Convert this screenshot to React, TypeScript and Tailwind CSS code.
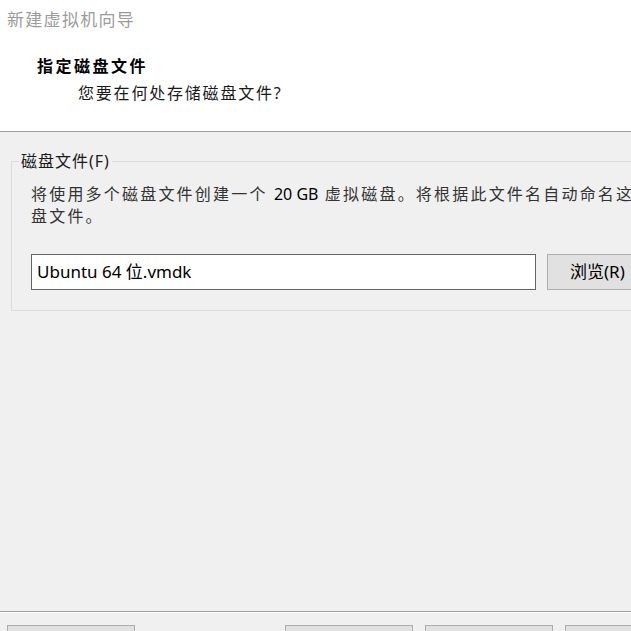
export default function App() {
  const font = { fontFamily: '"Noto Sans", "Noto Sans CJK SC", sans-serif' };

  return (
    <div className="w-[631px] h-[631px] overflow-hidden flex flex-col bg-[#f0f0f0]" style={font}>
      {/* header */}
      <div className="h-[132px] shrink-0 bg-white border-b border-[#a0a0a0]">
        <div className="pl-[7px] pt-[8px] text-[17px] leading-[24px] tracking-[1.3px] text-[#9b9b9b]">新建虚拟机向导</div>
        <div className="pl-[37px] pt-[22px] text-[16px] leading-[24px] tracking-[2.5px] font-bold text-black">指定磁盘文件</div>
        <div className="pl-[78px] pt-[3px] text-[16px] leading-[24px] tracking-[1.8px] text-[#1a1a1a]">您要在何处存储磁盘文件?</div>
      </div>

      {/* body */}
      <div className="flex-1 min-h-0">
        <fieldset className="mt-[19px] ml-[11px] w-[660px] border border-[#dcdcdc] pl-[19px] pt-[12px] pb-[20px]">
          <legend className="-ml-[12px] px-[2px] text-[16px] leading-[20px] tracking-[1px] text-[#1a1a1a]">磁盘文件(F)</legend>
          <p className="whitespace-nowrap text-[16px] leading-[22px] tracking-[2.2px] text-[#333]">
            将使用多个磁盘文件创建一个 <span className="text-black tracking-normal">20 GB</span> 虚拟磁盘。将根据此文件名自动命名这些磁
            <br />
            盘文件。
          </p>
          <div className="mt-[27px] flex gap-[11px]">
            <div className="w-[505px] h-[36px] shrink-0 bg-white border border-[#646464] flex items-center pl-[5px] text-[17px] text-black">
              Ubuntu 64 位.vmdk
            </div>
            <button className="w-[100px] h-[36px] shrink-0 bg-[#e1e1e1] border border-[#adadad] text-left pl-[22px] text-[17px] text-black">
              浏览(R)
            </button>
          </div>
        </fieldset>
      </div>

      {/* footer */}
      <div className="h-[20px] shrink-0 border-t border-[#a0a0a0]">
        <div className="h-px bg-white" />
        <div className="pt-[12px] flex">
          <button aria-label="帮助" className="ml-[7px] w-[128px] h-[30px] shrink-0 bg-[#e1e1e1] border border-[#adadad]" />
          <button aria-label="上一步" className="ml-[150px] w-[128px] h-[30px] shrink-0 bg-[#e1e1e1] border border-[#adadad]" />
          <button aria-label="下一步" className="ml-[12px] w-[128px] h-[30px] shrink-0 bg-[#e1e1e1] border border-[#adadad]" />
          <button aria-label="取消" className="ml-[12px] w-[128px] h-[30px] shrink-0 bg-[#e1e1e1] border border-[#adadad]" />
        </div>
      </div>
    </div>
  );
}
